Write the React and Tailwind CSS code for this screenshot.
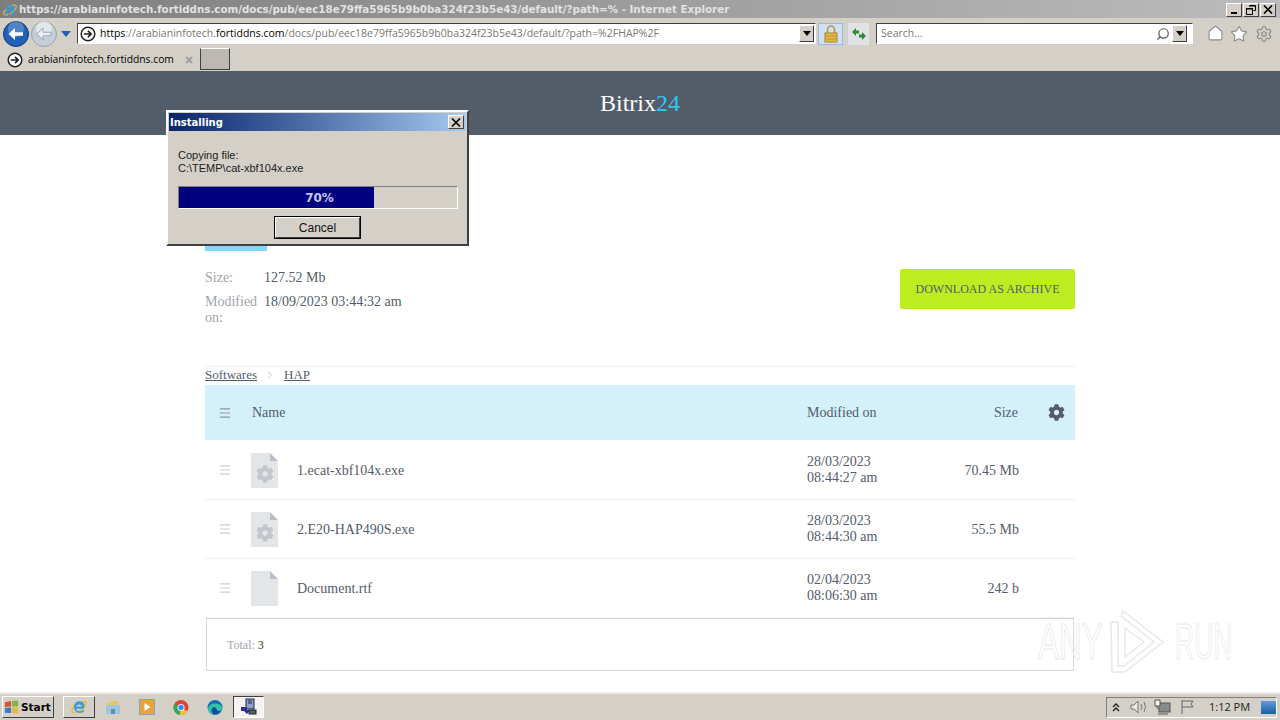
import { Menu, ChevronRight, Settings, Home, Star, Search } from "lucide-react";
import { FaCog } from "react-icons/fa";

const files = [
  { name: "1.ecat-xbf104x.exe", date: "28/03/2023", time: "08:44:27 am", size: "70.45 Mb", exe: true },
  { name: "2.E20-HAP490S.exe", date: "28/03/2023", time: "08:44:30 am", size: "55.5 Mb", exe: true },
  { name: "Document.rtf", date: "02/04/2023", time: "08:06:30 am", size: "242 b", exe: false },
];

const GoIcon = () => (
  <svg width="16" height="16" viewBox="0 0 16 16" className="shrink-0">
    <circle cx="8" cy="8" r="6.8" fill="#fff" stroke="#222" strokeWidth="1.5" />
    <path d="M3.8 8h7M8 4.8 11.2 8 8 11.2" fill="none" stroke="#222" strokeWidth="1.7" />
  </svg>
);

const NavButton = ({ grey }) => (
  <svg width="28" height="28" viewBox="0 0 28 28" className="shrink-0">
    <circle cx="14" cy="14" r="12.5" fill={grey ? "#c5ced8" : "#1f62b8"} stroke={grey ? "#98a2ac" : "#14386e"} />
    <circle cx="14" cy="9" r="8" fill="#fff" opacity={grey ? "0.5" : "0.22"} />
    <path d="M21 12.2h-8V8l-6.5 6 6.5 6v-4.2h8z" fill={grey ? "#e8edf2" : "#fff"} stroke={grey ? "#9aa4ae" : "none"} />
  </svg>
);

const DropArrow = () => (
  <div className="flex h-[17px] w-[15px] items-center justify-center border border-t-white border-l-white border-r-[#404040] border-b-[#404040] bg-[#d4d0c8]">
    <div className="h-0 w-0 border-x-[4px] border-t-[5px] border-x-transparent border-t-black"></div>
  </div>
);

const WinButton = ({ children }) => (
  <div className="flex h-[14px] w-[16px] items-center justify-center border border-t-white border-l-white border-r-[#404040] border-b-[#404040] bg-[#d4d0c8] text-black">
    {children}
  </div>
);

const CloseGlyph = () => (
  <svg width="10" height="9" viewBox="0 0 10 9">
    <path d="M1 0.5 9 8.5M9 0.5 1 8.5" stroke="#000" strokeWidth="1.6" />
  </svg>
);

const IeLogo = ({ size = 16 }) => (
  <svg width={size} height={size} viewBox="0 0 16 16" className="shrink-0">
    <ellipse cx="8" cy="8" rx="7.4" ry="3.2" transform="rotate(-35 8 8)" fill="none" stroke="#e9b93c" strokeWidth="1.2" />
    <path d="M13 9.5H5.5c.3 2.6 4 3.4 6 1.2h1.6c-2 4-9.500 3.400-9.500-2.700 0-5.600 7-6.600 9-2.600.4.900.5 2.600-.6 4.100zM5.600 7.600h5c-.2-2.500-4.700-2.500-5 0z" fill="#3d9bdc" />
  </svg>
);

const FileIcon = ({ exe }) => (
  <div className="relative h-[35px] w-[27px]">
    <svg width="27" height="35" viewBox="0 0 27 35">
      <path d="M0 0h19v8h8v27H0z" fill="#e3e6e9" />
      <path d="M19 0l8 8h-8z" fill="#b9bec4" />
    </svg>
    {exe && <FaCog size={18} className="absolute left-[5px] top-[12px] text-[#c3c7cc]" />}
  </div>
);

const TitleBar = () => (
  <div className="flex h-[18px] items-center bg-gradient-to-r from-[#7e7e7e] to-[#bcbcbc] pl-[2px] pr-[4px] pt-[1px]">
    <IeLogo />
    <span className="ml-[1px] whitespace-nowrap font-['DejaVu_Sans'] text-[10.3px] font-bold text-[#e2e2e2]">
      https://arabianinfotech.fortiddns.com/docs/pub/eec18e79ffa5965b9b0ba324f23b5e43/default/?path=% - Internet Explorer
    </span>
    <div className="ml-auto flex gap-[1px]">
      <WinButton>
        <div className="mt-[7px] h-[2px] w-[6px] bg-black"></div>
      </WinButton>
      <WinButton>
        <svg width="10" height="10" viewBox="0 0 10 10">
          <path d="M3.5.5h6v5h-2M.5 3.5h6v6h-6z" fill="none" stroke="#000" />
          <path d="M3 1h7M0 4h7" stroke="#000" />
        </svg>
      </WinButton>
      <WinButton>
        <CloseGlyph />
      </WinButton>
    </div>
  </div>
);

const AddressBar = () => (
  <div className="flex h-[29px] items-center bg-[#d4d0c8] pl-[2px] pt-[2px]">
    <NavButton />
    <NavButton grey />
    <div className="ml-[3px] h-0 w-0 border-x-[5px] border-t-[6px] border-x-transparent border-t-[#1f62b8]"></div>
    <div className="ml-[6px] flex h-[21px] w-[739px] items-center border border-t-[#404040] border-l-[#404040] border-r-white border-b-white bg-white pl-[2px] pr-[1px]">
      <GoIcon />
      <span className="ml-[4px] whitespace-nowrap font-['Open_Sans'] text-[10.5px] text-[#777]">
        <span className="text-black">https</span>://arabianinfotech.<span className="text-black">fortiddns.com</span>/docs/pub/eec18e79ffa5965b9b0ba324f23b5e43/default/?path=%2FHAP%2F
      </span>
      <div className="ml-auto">
        <DropArrow />
      </div>
    </div>
    <div className="ml-[2px] flex h-[22px] w-[25px] items-center justify-center border border-[#9db9dc] bg-[#cfe0f5]">
      <svg width="14" height="18" viewBox="0 0 14 18">
        <path d="M3.5 8V4.5a3.5 3.5 0 0 1 7 0V8" fill="none" stroke="#b8973a" strokeWidth="1.6" />
        <rect x="1" y="8" width="12" height="9" fill="#e5b83e" stroke="#a8842c" />
        <path d="M1 11h12M1 14h12" stroke="#b8973a" />
      </svg>
    </div>
    <div className="ml-[5px] flex h-[22px] w-[21px] items-center justify-center bg-[#dfe3e6]">
      <svg width="16" height="14" viewBox="0 0 16 14">
        <path d="M1 5 5 1v2.500h3v3H5V9z" fill="#2f8a2f" />
        <path d="M15 9l-4 4v-2.500H8v-3h3V5z" fill="#2f8a2f" />
      </svg>
    </div>
    <div className="ml-[7px] flex h-[21px] w-[317px] items-center border border-t-[#404040] border-l-[#404040] border-r-white border-b-white bg-white pl-[4px] pr-[5px]">
      <span className="font-['Open_Sans'] text-[10.5px] text-[#777]">Search...</span>
      <Search size={14} strokeWidth={2} className="ml-auto -scale-x-100 text-[#555]" />
      <div className="ml-[2px]">
        <DropArrow />
      </div>
    </div>
    <Home size={17} strokeWidth={1.5} className="ml-[14px] fill-white text-[#8c8c8c]" />
    <Star size={18} strokeWidth={1.5} className="ml-[6px] fill-white text-[#8c8c8c]" />
    <Settings size={18} strokeWidth={1.5} className="ml-[7px] text-[#8c8c8c]" />
  </div>
);

const TabRow = () => (
  <div className="flex h-[24px] items-stretch bg-[#d4d0c8]">
    <div className="flex w-[198px] items-center pl-[7px] pt-[2px]">
      <GoIcon />
      <span className="ml-[5px] whitespace-nowrap font-['Open_Sans'] text-[10.3px] text-black">
        arabianinfotech.fortiddns.com
      </span>
      <span className="ml-[11px] font-['Liberation_Sans'] text-[14px] font-bold leading-none text-[#999]">×</span>
    </div>
    <div className="ml-[2px] mt-[1px] h-[22px] w-[30px] border border-t-white border-l-[#404040] border-r-[#404040] border-b-[#404040] bg-[#bdb8b2]"></div>
  </div>
);

const InstallDialog = () => (
  <div className="absolute left-[166px] top-[110px] flex h-[136px] w-[303px] flex-col border-2 border-t-white border-l-white border-r-[#404040] border-b-[#404040] bg-[#d4d0c8] p-[1px] font-['Liberation_Sans']">
    <div className="flex h-[18px] items-center justify-between bg-gradient-to-r from-[#0a246a] to-[#a6caf0] pl-[1px] pr-[2px]">
      <span className="font-['DejaVu_Sans'] text-[10px] font-bold text-white">Installing</span>
      <div className="flex h-[14px] w-[16px] items-center justify-center border border-t-white border-l-white border-r-[#404040] border-b-[#404040] bg-[#d4d0c8]">
        <CloseGlyph />
      </div>
    </div>
    <div className="flex flex-1 flex-col px-[9px] pt-[18px]">
      <div className="text-[11px] leading-[13px] text-[#222]">
        <div>Copying file:</div>
        <div>C:\TEMP\cat-xbf104x.exe</div>
      </div>
      <div className="relative mt-[11px] h-[23px] w-[280px] border border-t-[#808080] border-l-[#808080] border-r-white border-b-white">
        <div className="h-full w-[70%] bg-[#000080]"></div>
        <div className="absolute inset-0 flex items-center justify-center pl-[3px] font-['DejaVu_Sans'] text-[12px] font-bold text-[#c9c9f2]">
          70%
        </div>
      </div>
      <div className="ml-[96px] mt-[7px] h-[23px] w-[87px] border border-black">
        <div className="flex h-full items-center justify-center border border-t-white border-l-white border-r-[#404040] border-b-[#404040] bg-[#d4d0c8] text-[12px] text-[#111]">
          Cancel
        </div>
      </div>
    </div>
  </div>
);

const Watermark = () => (
  <div className="pointer-events-none absolute left-[1038px] top-[610px] flex items-center font-['Liberation_Sans'] text-[50px] leading-none text-transparent [-webkit-text-stroke:1px_#e8e8e8]">
    <span className="w-[72px] origin-left scale-x-[0.63]">ANY</span>
    <svg width="54" height="63" viewBox="0 0 54 63">
      <path d="M13 1 53 32 15 62 2 62 1 12 8 12 8 56 14 56 44 32 11 6z" fill="none" stroke="#e8e8e8" strokeWidth="1.5" />
      <path d="M15 18 34 32 15 47z" fill="none" stroke="#e8e8e8" strokeWidth="1.5" />
    </svg>
    <span className="ml-[11px] w-[60px] origin-left scale-x-[0.53]">RUN</span>
  </div>
);

const Taskbar = () => (
  <div className="flex h-[28px] items-center border-t-2 border-t-[#eeece8] bg-[#d4d0c8] pl-[2px]">
    <div className="flex h-[22px] w-[52px] items-center border border-t-white border-l-white border-r-[#404040] border-b-[#404040] pl-[1px]">
      <svg width="16" height="16" viewBox="0 0 17 16" className="shrink-0">
        <path d="M1 3 7.500 1.500v6L1 8z" fill="#d9532c" />
        <path d="M8.500 1.500 15 1v6.500L8.500 7.500z" fill="#7ab648" />
        <path d="M1 9l6.500-.5v6L1 14z" fill="#3b78c9" />
        <path d="M8.500 8.500H15V15l-6.500-.5z" fill="#e8b93a" />
      </svg>
      <span className="ml-[1px] font-['DejaVu_Sans'] text-[10.5px] font-bold leading-none text-black">Start</span>
    </div>
    <div className="ml-[9px] flex h-[22px] w-[32px] items-center justify-center border border-t-white border-l-white border-r-[#404040] border-b-[#404040]">
      <IeLogo size={18} />
    </div>
    <div className="ml-[10px] flex w-[16px] justify-center">
      <svg width="16" height="16" viewBox="0 0 16 16">
        <path d="M1 4h5l1-2h6v4H1z" fill="#e5c566" />
        <path d="M1 6h14v9H1z" fill="#9fc6df" />
        <path d="M6 15v-5h4v5z" fill="#5f90b4" />
      </svg>
    </div>
    <div className="ml-[18px] flex w-[16px] justify-center">
      <svg width="16" height="16" viewBox="0 0 16 16">
        <rect x="0.5" y="0.5" width="15" height="15" fill="#e9a23b" stroke="#8aa3bd" />
        <path d="M5.500 4v8l6-4z" fill="#fff" />
      </svg>
    </div>
    <div className="ml-[18px] flex w-[16px] justify-center">
      <svg width="17" height="17" viewBox="0 0 32 32">
        <circle cx="16" cy="16" r="15" fill="#dc4437" />
        <path d="M16 16 29 23.500A15 15 0 0 1 13 30.700z" fill="#f1c233" />
        <path d="M16 16 13 30.700A15 15 0 0 1 3 8.500z" fill="#31a853" />
        <circle cx="16" cy="16" r="7" fill="#fff" />
        <circle cx="16" cy="16" r="5.300" fill="#4285f4" />
      </svg>
    </div>
    <div className="ml-[18px] flex w-[16px] justify-center">
      <svg width="17" height="17" viewBox="0 0 32 32">
        <circle cx="16" cy="16" r="15" fill="#0f6fb6" />
        <path d="M2 18C4 8 20 4 29 13c3 5 0 10-5 10-6 0-3-7-9-8C9 14 6 22 13 30 7 29 3 24 2 18z" fill="#35c1a4" />
        <path d="M14 16c5 1 3 8 10 7l3-1c-3 6-11 9-16 4-2-3-2-8 3-10z" fill="#0a4f8f" />
      </svg>
    </div>
    <div className="ml-[10px] flex h-[22px] w-[31px] items-center justify-center border border-t-[#404040] border-l-[#404040] border-r-white border-b-white bg-[#f4f3f0]">
      <svg width="18" height="18" viewBox="0 0 18 18">
        <rect x="6" y="1" width="8" height="10" fill="#8ea0c8" stroke="#1c2450" />
        <path d="M8 3h4M8 5h4" stroke="#1c2450" />
        <path d="M1 9h6v3h3l-3 4-3-3H1z" fill="#2c2f8c" />
        <rect x="9" y="12" width="7" height="4" fill="#4a6a4a" stroke="#1c2450" />
      </svg>
    </div>
    <div className="ml-auto mr-[3px] flex h-[21px] w-[171px] items-center border border-t-[#808080] border-l-[#808080] border-r-white border-b-white pl-[5px] text-[#444]">
      <svg width="8" height="9" viewBox="0 0 8 9" className="shrink-0">
        <path d="M1 4 4 1l3 3M1 8l3-3 3 3" fill="none" stroke="#222" strokeWidth="1.4" />
      </svg>
      <svg width="18" height="14" viewBox="0 0 18 14" className="ml-[10px] shrink-0">
        <path d="M1 5h3l4-4v12L4 9H1z" fill="#e8e6e0" stroke="#777" />
        <path d="M11 4q2 3 0 6M14 2q3 5 0 10" fill="none" stroke="#777" />
      </svg>
      <svg width="17" height="16" viewBox="0 0 17 16" className="ml-[6px] shrink-0">
        <rect x="5" y="4" width="11" height="9" fill="#8a8a8a" stroke="#555" />
        <path d="M1 1h5v6H1zM3 7v2h3" fill="#f2f2f2" stroke="#555" />
        <path d="M4 15h10" stroke="#555" />
      </svg>
      <svg width="16" height="16" viewBox="0 0 16 16" className="ml-[9px] shrink-0">
        <path d="M2 1v14M2 2h11l-2 3 2 3H2" fill="none" stroke="#666" />
      </svg>
      <span className="ml-[13px] whitespace-nowrap font-['Open_Sans'] text-[11px] text-[#222]">1:12 PM</span>
      <div className="ml-[11px] h-[13px] w-[15px] shrink-0 bg-gradient-to-b from-[#5a9fdc] to-[#1b5c9e]"></div>
    </div>
  </div>
);

export default function App() {
  return (
    <div className="relative flex h-[720px] w-[1280px] flex-col overflow-hidden bg-white font-['Liberation_Serif'] text-[14px] text-[#535c69]">
      <TitleBar />
      <AddressBar />
      <TabRow />
      <header className="flex h-[64px] items-center justify-center bg-[#535c69] text-[24px] text-white">
        Bitrix<span className="text-[#2fc6f6]">24</span>
      </header>

      <main className="mx-auto flex w-[870px] flex-1 flex-col">
        <div className="mt-[105px] h-[11px] w-[62px] bg-[#7fd8f5]"></div>
        <div className="mt-[18px] flex items-start justify-between">
          <div className="w-[260px] pt-[1px] leading-[16px]">
            <div className="flex">
              <span className="w-[59px] text-[#a0a4aa]">Size:</span>
              <span>127.52 Mb</span>
            </div>
            <div className="mt-[8px] flex">
              <span className="w-[59px] text-[#a0a4aa]">Modified on:</span>
              <span>18/09/2023 03:44:32 am</span>
            </div>
          </div>
          <div className="flex h-[40px] w-[175px] items-center justify-center rounded-[2px] bg-[#bbed21] text-[12px]">
            DOWNLOAD AS ARCHIVE
          </div>
        </div>

        <div className="mt-[40px] flex h-[19px] items-center border-t border-[#eef0f1] pb-[2px] text-[13px] underline">
          <span>Softwares</span>
          <ChevronRight size={12} className="mx-[7px] text-[#c5c8cc]" />
          <span className="ml-[1px]">HAP</span>
        </div>

        <div className="flex h-[55px] items-center bg-[#d4f0fb] pl-[13px]">
          <Menu size={14} strokeWidth={2} className="text-[#8b96a3]" />
          <span className="ml-[20px]">Name</span>
          <span className="ml-auto w-[105px] pl-[1px]">Modified on</span>
          <span className="w-[107px] text-right">Size</span>
          <FaCog size={17} className="ml-[30px] mr-[10px] text-[#535c69]" />
        </div>

        <div className="mt-[1px]">
          {files.map((f) => (
            <div key={f.name} className="flex h-[59px] items-center border-b border-[#eef0f1] pl-[13px]">
              <Menu size={14} strokeWidth={2} className="text-[#c9ced3]" />
              <div className="ml-[19px]">
                <FileIcon exe={f.exe} />
              </div>
              <span className="ml-[19px]">{f.name}</span>
              <div className="ml-auto w-[106px] leading-[16px]">
                <div>{f.date}</div>
                <div>{f.time}</div>
              </div>
              <span className="w-[106px] text-right">{f.size}</span>
              <div className="w-[56px]"></div>
            </div>
          ))}
        </div>

        <div className="ml-[1px] mr-[1px] flex h-[53px] items-center border border-[#d5d7da] pl-[20px] text-[12px]">
          <span className="text-[#a0a4aa]">Total:</span>
          <span className="ml-[3px] text-[#333]">3</span>
        </div>
      </main>

      <Taskbar />
      <InstallDialog />
      <Watermark />
    </div>
  );
}
